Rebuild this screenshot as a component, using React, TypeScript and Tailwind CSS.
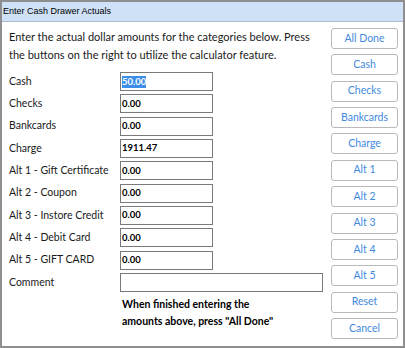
import React from 'react';

const font = { fontFamily: 'Lato, "Noto Sans", sans-serif' };

const rows = [
  { label: 'Cash', value: '50.00', selected: true },
  { label: 'Checks', value: '0.00' },
  { label: 'Bankcards', value: '0.00' },
  { label: 'Charge', value: '1911.47' },
  { label: 'Alt 1 - Gift Certificate', value: '0.00' },
  { label: 'Alt 2 - Coupon', value: '0.00' },
  { label: 'Alt 3 - Instore Credit', value: '0.00' },
  { label: 'Alt 4 - Debit Card', value: '0.00' },
  { label: 'Alt 5 - GIFT CARD', value: '0.00' },
];

const buttons = ['All Done', 'Cash', 'Checks', 'Bankcards', 'Charge', 'Alt 1', 'Alt 2', 'Alt 3', 'Alt 4', 'Alt 5', 'Reset', 'Cancel'];

export default function App() {
  return (
    <div className="w-[405px] h-[348px] bg-white border-2 border-[#8e8e8e] flex flex-col overflow-hidden" style={font}>
      {/* title bar */}
      <div className="h-[20px] shrink-0 bg-[#cfe1f7] border-b border-[#a9b9cc] flex items-center pl-[1px]">
        <span className="text-[9px] text-black font-['Liberation_Sans',sans-serif]">Enter Cash Drawer Actuals</span>
      </div>

      <div className="flex flex-1">
        {/* form side */}
        <div className="flex-1 min-w-0 pl-[7px] pt-[6px]">
          <p className="whitespace-nowrap text-[11px] leading-[18px] text-[#1a1a1a]">
            Enter the actual dollar amounts for the categories below. Press
            <br />
            the buttons on the right to utilize the calculator feature.
          </p>

          <div className="mt-[8px] flex flex-col gap-[3.33px]">
            {rows.map(r => (
              <div key={r.label} className="flex items-center h-[19px]">
                <span className="w-[111px] whitespace-nowrap text-[10.5px] text-[#1a1a1a]">{r.label}</span>
                <div className="w-[93px] h-[19px] border border-[#7a7a7a] flex items-center pl-[1px]">
                  <span className={`text-[9.5px] font-bold leading-[12px] ${r.selected ? 'bg-[#3d8ee8] text-white' : 'text-black'}`}>
                    {r.value}
                  </span>
                </div>
              </div>
            ))}
            <div className="flex items-center h-[19px]">
              <span className="w-[111px] text-[10.5px] text-[#1a1a1a]">Comment</span>
              <div className="w-[203px] h-[19px] border border-[#7a7a7a]" />
            </div>
          </div>

          <p className="mt-[4px] ml-[113px] whitespace-nowrap text-[10.5px] leading-[17px] font-bold text-black">
            When finished entering the
            <br />
            amounts above, press "All Done"
          </p>
        </div>

        {/* calculator buttons */}
        <div className="w-[67px] shrink-0 mr-[5px] pt-[6px] flex flex-col gap-[5.36px]">
          {buttons.map(b => (
            <button
              key={b}
              className="h-[21px] w-full bg-white border border-[#b9b9b9] rounded-[3px] text-[10.5px] text-[#3f8ae0] flex items-center justify-center"
            >
              {b}
            </button>
          ))}
        </div>
      </div>
    </div>
  );
}
